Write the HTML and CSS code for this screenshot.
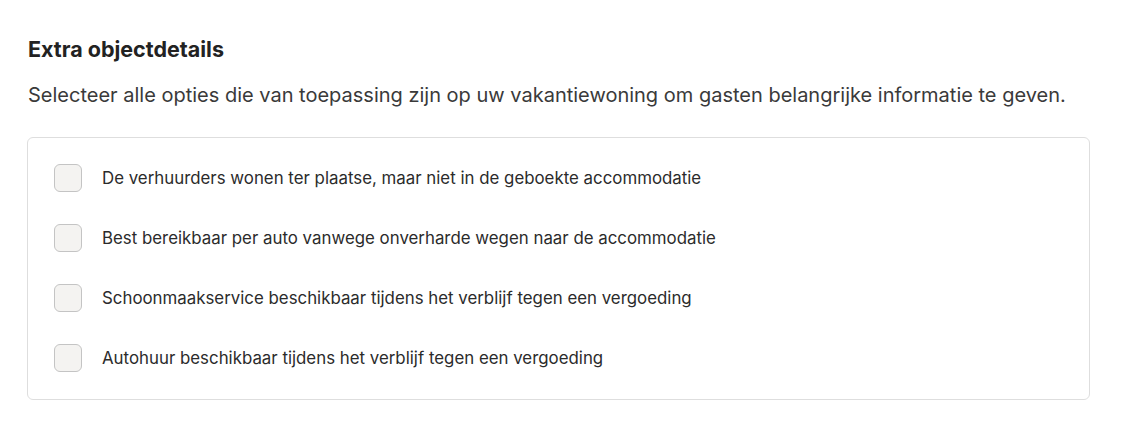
FILE: index.html
```html
<!DOCTYPE html>
<html lang="nl">
<head>
<meta charset="UTF-8">
<title>Extra objectdetails</title>
<link rel="stylesheet" href="styles.css">
</head>
<body>

<div class="section">
    <h2>Extra objectdetails</h2>
    <p class="intro">Selecteer alle opties die van toepassing zijn op uw vakantiewoning om gasten belangrijke informatie te geven.</p>

    <div class="card">
        <label class="option">
            <input type="checkbox">
            <span class="box"></span>
            <span>De verhuurders wonen ter plaatse, maar niet in de geboekte accommodatie</span>
        </label>
        <label class="option">
            <input type="checkbox">
            <span class="box"></span>
            <span>Best bereikbaar per auto vanwege onverharde wegen naar de accommodatie</span>
        </label>
        <label class="option">
            <input type="checkbox">
            <span class="box"></span>
            <span>Schoonmaakservice beschikbaar tijdens het verblijf tegen een vergoeding</span>
        </label>
        <label class="option">
            <input type="checkbox">
            <span class="box"></span>
            <span>Autohuur beschikbaar tijdens het verblijf tegen een vergoeding</span>
        </label>
    </div>
</div>

</body>
</html>
```

FILE: styles.css
```css
*{
    box-sizing:border-box;
}

body{
    margin:0;
    font-family:Inter, "Noto Sans", sans-serif;
    background:#fff;
    color:#2b2b2b;
}

.section{
    padding:36px 54px 0 27px;
}

h2{
    margin:0 0 0 1px;
    font-size:21.5px;
    font-weight:700;
    line-height:26px;
    color:#222;
}

.intro{
    margin:20px 0 29px 1px;
    font-size:20px;
    line-height:26px;
    color:#3a3a3a;
}

.card{
    border:1px solid #dedede;
    border-radius:6px;
    padding:26px 26px 27px;
    display:flex;
    flex-direction:column;
    gap:32px;
}

.option{
    display:flex;
    align-items:center;
    gap:20px;
    font-size:16.85px;
    line-height:24px;
    color:#2b2b2b;
    cursor:pointer;
}

.option input{
    display:none;
}

.box{
    width:28px;
    height:28px;
    border:1px solid #c4c4c4;
    border-radius:6px;
    background:#f4f3f1;
    flex-shrink:0;
}

.option input:checked + .box{
    background:#222;
    border-color:#222;
}
```
